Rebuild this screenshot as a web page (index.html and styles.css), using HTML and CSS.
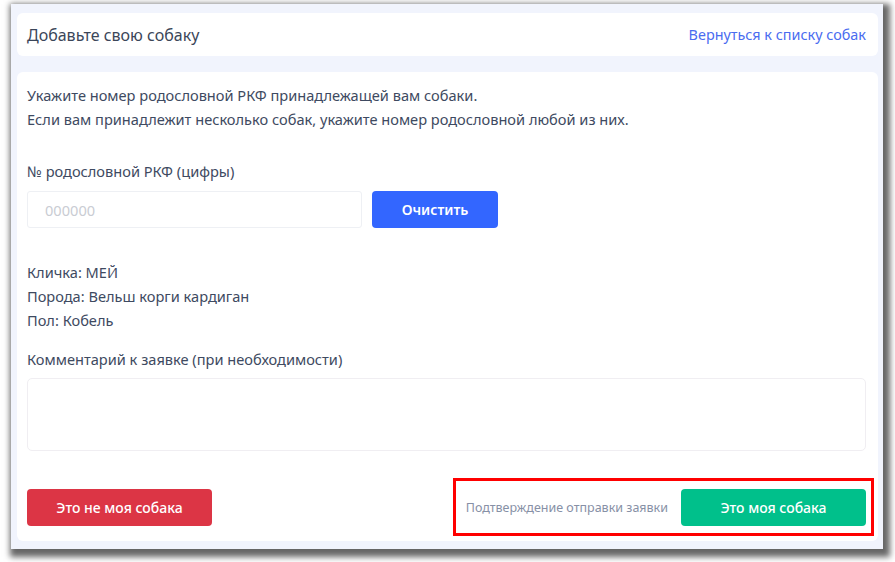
FILE: index.html
```html
<!DOCTYPE html>
<html>
<head>
  <title>Добавьте свою собаку</title>
  <link rel="stylesheet" href="styles.css">
</head>
<body>
  <div class="window">
    <div class="card card-head">
      <h1 class="card-title">Добавьте свою собаку</h1>
      <a class="back-link" href="#">Вернуться к списку собак</a>
    </div>

    <div class="card card-main">
      <p class="intro">
        Укажите номер родословной РКФ принадлежащей вам собаки.<br>
        Если вам принадлежит несколько собак, укажите номер родословной любой из них.
      </p>

      <label class="field-label">№ родословной РКФ (цифры)</label>
      <div class="search-row">
        <input class="field-input" type="text" placeholder="000000">
        <button class="btn btn-blue">Очистить</button>
      </div>

      <div class="dog-info">
        <div>Кличка: МЕЙ</div>
        <div>Порода: Вельш корги кардиган</div>
        <div>Пол: Кобель</div>
      </div>

      <label class="field-label">Комментарий к заявке (при необходимости)</label>
      <textarea class="field-textarea"></textarea>

      <div class="actions">
        <button class="btn btn-red">Это не моя собака</button>
        <div class="confirm">
          <span class="confirm-text">Подтверждение отправки заявки</span>
          <button class="btn btn-green">Это моя собака</button>
        </div>
      </div>
    </div>
  </div>
</body>
</html>
```

FILE: styles.css
```css
body {
  margin: 0;
  padding: 4px 0 13px 11px;
  min-height: 562px;
  box-sizing: border-box;
  background-color: #ffffff;
  font-family: "Noto Sans", "Open Sans", sans-serif;
  color: #3e4a61;
}

.window {
  width: 872px;
  height: 545px;
  padding: 9px 5px 8px 6px;
  box-sizing: border-box;
  background-color: #f1f4fd;
  box-shadow: 3px 4px 6px 4px rgba(0, 0, 0, 0.6);
  display: flex;
  flex-direction: column;
  gap: 16px;
}

.card {
  background-color: #ffffff;
  border-radius: 6px;
}

.card-head {
  height: 43px;
  padding: 0 12px 0 10px;
  display: flex;
  align-items: center;
  justify-content: space-between;
}

.card-title {
  margin: 0;
  font-size: 16px;
  font-weight: 400;
  color: #3b4659;
}

.back-link {
  font-size: 14.4px;
  color: #4a6cf0;
  text-decoration: none;
}

.card-main {
  flex: 1;
  padding: 11px 12px 0 10px;
  display: flex;
  flex-direction: column;
  font-size: 14.6px;
  line-height: 24px;
}

.intro {
  margin: 0 0 28px;
}

.field-label {
  display: block;
}

.search-row {
  display: flex;
  gap: 10px;
  margin-top: 8px;
}

.field-input {
  width: 335px;
  height: 37px;
  box-sizing: border-box;
  border: 1px solid #eef0f4;
  border-radius: 3px;
  padding: 0 17px;
  font-family: inherit;
  font-size: 14.6px;
  color: #3e4a61;
}

.field-input::placeholder {
  color: #c9ccd3;
}

.btn {
  height: 37px;
  border: none;
  border-radius: 4px;
  font-family: inherit;
  font-size: 14px;
  font-weight: 500;
  color: #ffffff;
  cursor: pointer;
}

.btn-blue {
  width: 126px;
  background-color: #3366ff;
  font-weight: 600;
}

.btn-red {
  width: 185px;
  background-color: #dc3545;
}

.btn-green {
  width: 185px;
  background-color: #00c08b;
}

.dog-info {
  margin-top: 32px;
}

.dog-info + .field-label {
  margin-top: 15px;
}

.field-textarea {
  height: 73px;
  margin-top: 7px;
  box-sizing: border-box;
  border: 1px solid #f0eef2;
  border-radius: 5px;
  resize: none;
  font-family: inherit;
}

.actions {
  margin-top: 27px;
  display: flex;
  align-items: center;
  justify-content: space-between;
}

.confirm {
  margin-right: -8px;
  padding: 8px 5px 7px 10px;
  border: 3px solid #ff0000;
  display: flex;
  align-items: center;
  gap: 13px;
}

.confirm-text {
  font-size: 12.5px;
  color: #8790a6;
}
```
